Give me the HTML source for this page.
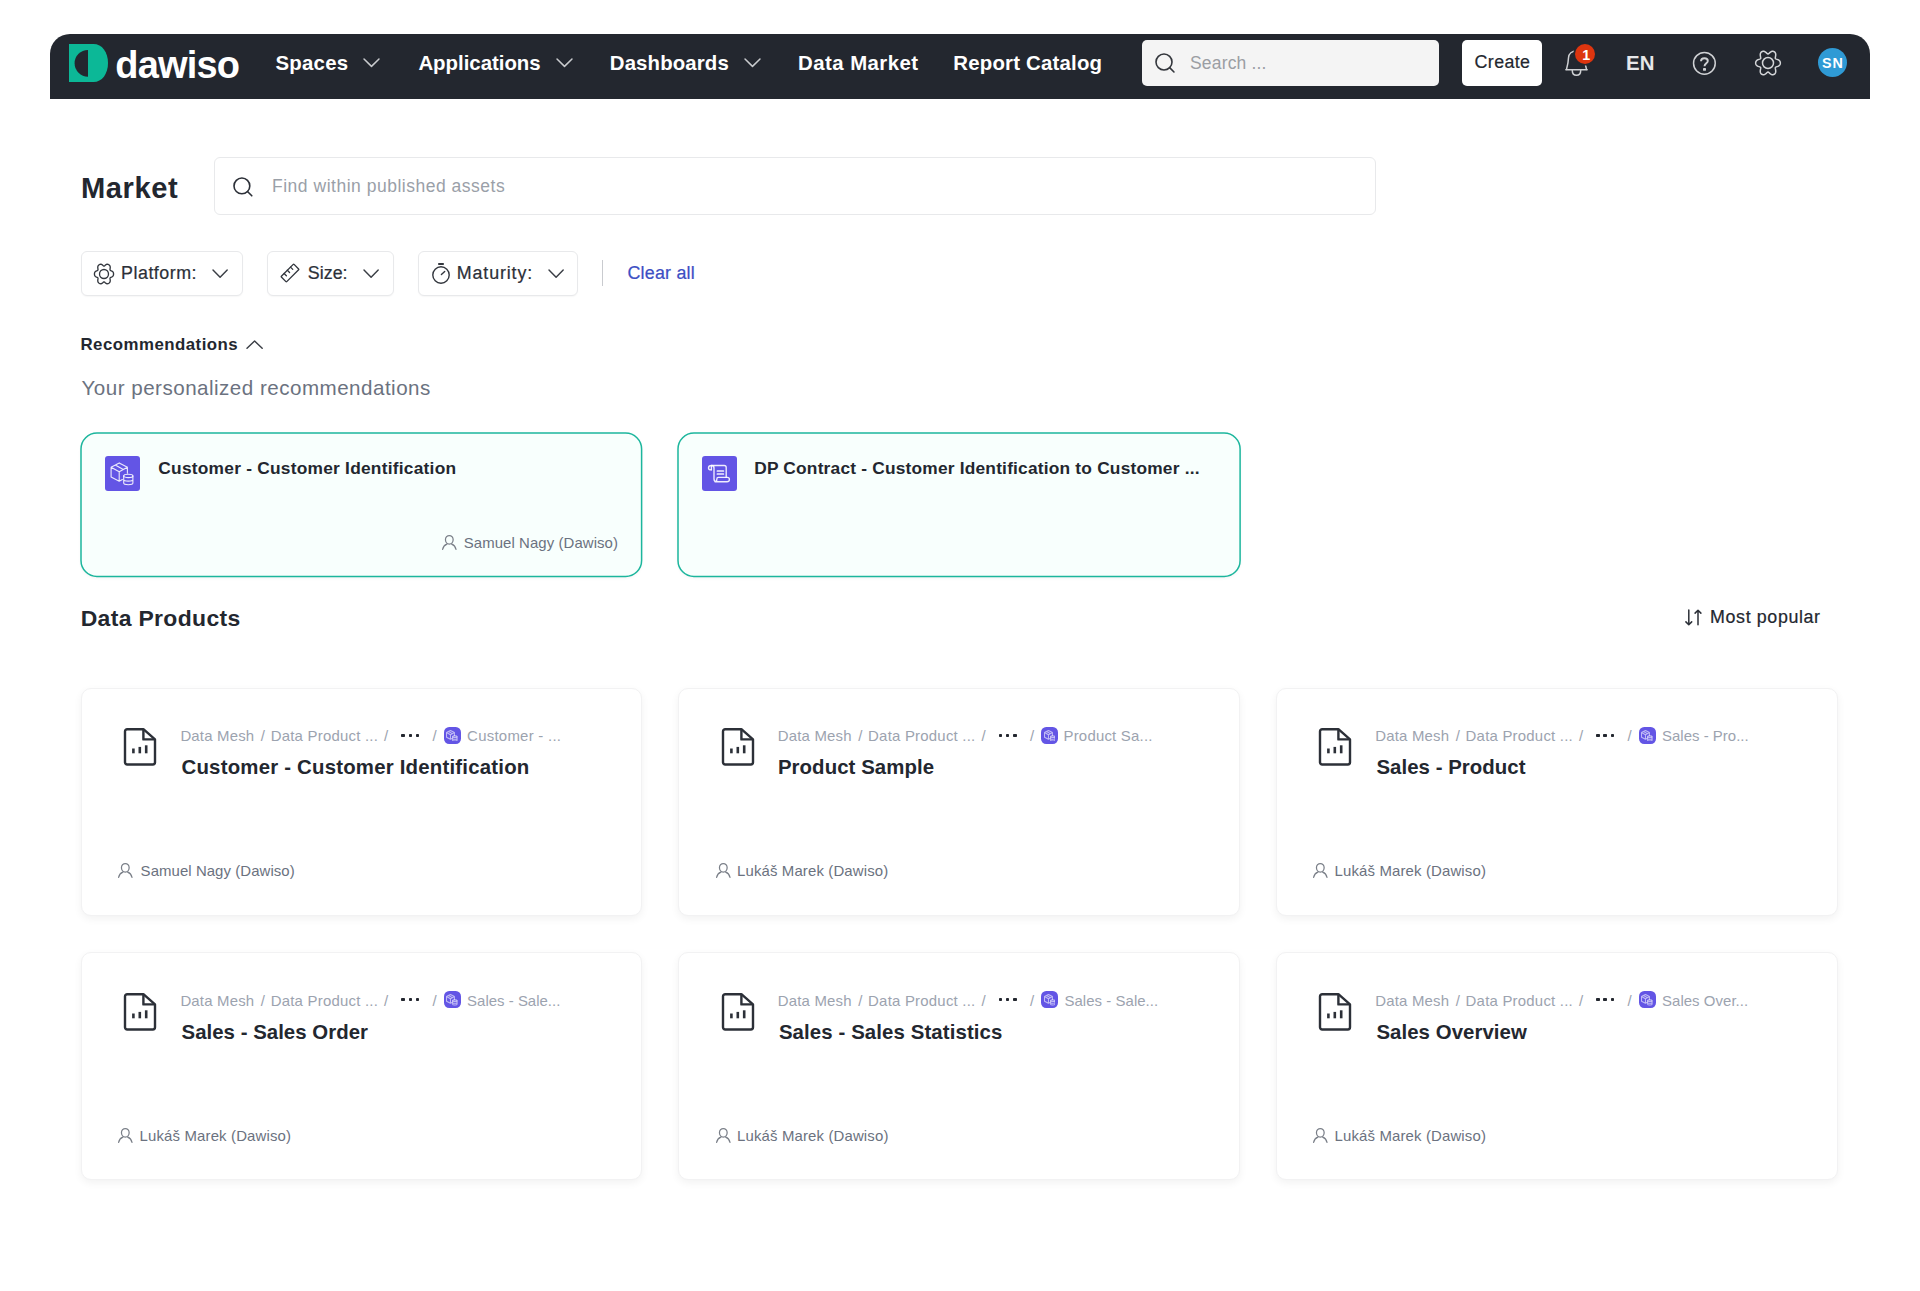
<!DOCTYPE html>
<html lang="en">
<head>
<meta charset="utf-8">
<meta name="viewport" content="width=1920">
<title>Market - dawiso</title>
<style>
html,body{margin:0;padding:0;background:#fff;}
body{width:1920px;height:1291px;position:relative;overflow:hidden;font-family:"Liberation Sans",Arial,sans-serif;}
*{box-sizing:border-box;}
.abs,.t,svg.i{position:absolute;}
header,main,section,article{display:block;position:static;margin:0;padding:0;}
.t{margin:0;white-space:nowrap;line-height:normal;display:block;}
h1.t,h2.t,h3.t{font-weight:700;}
.bar{left:50px;top:34px;width:1820px;height:65px;background:#23272f;border-radius:20px 20px 0 0;}
.nsearch{left:1142px;top:39.5px;width:296.5px;height:46.5px;background:#f4f4f4;border-radius:5px;}
.ncreate{left:1462px;top:39.5px;width:80px;height:46.5px;background:#fff;border-radius:5px;}
.badge{left:1575.1px;top:43.9px;width:20.4px;height:20.4px;border-radius:50%;background:#dd350f;box-shadow:0 0 0 1.6px #23272f;}
.avatar{left:1817.8px;top:48.1px;width:29.3px;height:29.3px;border-radius:50%;background:#2f9ad5;}
.msearch{left:214px;top:157px;width:1162px;height:58px;border:1.5px solid #e8e9eb;border-radius:6px;background:#fff;}
.fbtn{top:250.5px;height:45.5px;border:1.3px solid #e8e9eb;border-radius:6px;background:#fff;box-shadow:0 1px 1.5px rgba(0,0,0,.035);}
.divider{left:602px;top:260px;width:1.3px;height:26px;background:#c9cbcf;}
.ricon{top:456.4px;width:34.8px;height:34.6px;border-radius:3px;background:#6355e5;}
.card{width:561px;height:228px;border:1px solid #f2f2f3;border-radius:10px;background:#fff;box-shadow:0 3px 8px rgba(0,0,0,.055);}
.picon{width:17px;height:17.1px;border-radius:5.2px;background:#6355e5;}
.dots i{position:absolute;width:3.4px;height:3.4px;border-radius:0.8px;background:#23272f;top:0;}

</style>
</head>
<body>
<header class="topbar">
<div class="abs bar"></div>
<svg class="i" style="left:69.00px;top:44.00px" width="39" height="38" viewBox="0 0 39 38" aria-hidden="true"><path d="M0 0H24.5C33 0 39 8 39 19S33 38 24.5 38H0Z" fill="#0cb897"/><path d="M19 5.9A13.4 13.4 0 0 0 19 32.7Z" fill="#23272f"/></svg>
<svg class="i" style="left:361.50px;top:57.10px" width="19" height="11.4" viewBox="0 0 19 11.4" aria-hidden="true"><polyline points="2,2 9.5,9.4 17,2" fill="none" stroke="#c9cbce" stroke-width="1.5" stroke-linecap="round" stroke-linejoin="round"/></svg>
<svg class="i" style="left:554.50px;top:57.10px" width="19" height="11.4" viewBox="0 0 19 11.4" aria-hidden="true"><polyline points="2,2 9.5,9.4 17,2" fill="none" stroke="#c9cbce" stroke-width="1.5" stroke-linecap="round" stroke-linejoin="round"/></svg>
<svg class="i" style="left:742.50px;top:57.10px" width="19" height="11.4" viewBox="0 0 19 11.4" aria-hidden="true"><polyline points="2,2 9.5,9.4 17,2" fill="none" stroke="#c9cbce" stroke-width="1.5" stroke-linecap="round" stroke-linejoin="round"/></svg>
<div class="abs nsearch"></div>
<svg class="i" style="left:1154.40px;top:51.60px" width="24" height="24" viewBox="0 0 24 24" aria-hidden="true"><circle cx="10" cy="10" r="8" fill="none" stroke="#33363c" stroke-width="1.6"/><line x1="15.66" y1="15.66" x2="19.96" y2="19.96" stroke="#33363c" stroke-width="1.6" stroke-linecap="round"/></svg>
<div class="abs ncreate"></div>
<svg class="i" style="left:1563.00px;top:48.00px" width="28" height="30" viewBox="0 0 28 30" aria-hidden="true"><g fill="none" stroke="#cfd1d4" stroke-width="1.5" stroke-linecap="round" stroke-linejoin="round"><path d="M2.9 21.8H24.1"/><path d="M3.5 21.4C4.6 17.4 5.4 13.4 5.5 9.8C5.7 5.6 9 3 13.5 3S21.3 5.6 21.5 9.8C21.6 13.4 22.4 17.4 23.5 21.4"/><path d="M9.3 22.4C9.3 25.6 11 27.2 13.5 27.2S17.7 25.6 17.7 22.4"/></g></svg>
<div class="abs badge"></div>
<svg class="i" style="left:1690.00px;top:48.50px" width="29" height="29" viewBox="0 0 29 29" aria-hidden="true"><circle cx="14.4" cy="14.3" r="10.85" fill="none" stroke="#cfd1d4" stroke-width="1.5"/><path d="M11 12.3C11 10.3 12.4 9.2 14.4 9.2S17.8 10.3 17.8 12C17.8 14.2 14.5 14.5 14.5 17.3" fill="none" stroke="#cfd1d4" stroke-width="1.9"/><rect x="13" y="19" width="3" height="2.7" rx="0.4" fill="#cfd1d4"/></svg>
<svg class="i" style="left:1754.10px;top:48.80px" width="28" height="28" viewBox="0 0 28 28" aria-hidden="true"><path d="M26.35 14.00 L26.29 14.68 L26.09 15.34 L25.75 15.96 L25.24 16.52 L24.58 16.99 L23.81 17.36 L23.02 17.65 L22.30 17.90 L21.74 18.16 L21.40 18.51 L21.29 18.99 L21.35 19.63 L21.51 20.41 L21.67 21.28 L21.74 22.17 L21.69 23.01 L21.49 23.75 L21.15 24.38 L20.70 24.89 L20.18 25.28 L19.59 25.57 L18.95 25.72 L18.26 25.71 L17.55 25.53 L16.83 25.16 L16.14 24.64 L15.51 24.07 L14.95 23.53 L14.45 23.16 L14.00 23.02 L13.55 23.16 L13.05 23.53 L12.49 24.07 L11.86 24.64 L11.17 25.16 L10.45 25.53 L9.74 25.71 L9.05 25.72 L8.41 25.57 L7.83 25.28 L7.30 24.89 L6.85 24.38 L6.51 23.75 L6.31 23.01 L6.26 22.17 L6.33 21.28 L6.49 20.41 L6.65 19.63 L6.71 18.99 L6.60 18.51 L6.26 18.16 L5.70 17.90 L4.98 17.65 L4.19 17.36 L3.42 16.99 L2.76 16.52 L2.25 15.96 L1.91 15.34 L1.71 14.68 L1.65 14.00 L1.71 13.32 L1.91 12.66 L2.25 12.04 L2.76 11.48 L3.42 11.01 L4.19 10.64 L4.98 10.35 L5.70 10.10 L6.26 9.84 L6.60 9.49 L6.71 9.01 L6.65 8.37 L6.49 7.59 L6.33 6.72 L6.26 5.83 L6.31 4.99 L6.51 4.25 L6.85 3.62 L7.30 3.11 L7.82 2.72 L8.41 2.43 L9.05 2.28 L9.74 2.29 L10.45 2.47 L11.17 2.84 L11.86 3.36 L12.49 3.93 L13.05 4.47 L13.55 4.84 L14.00 4.98 L14.45 4.84 L14.95 4.47 L15.51 3.93 L16.14 3.36 L16.83 2.84 L17.55 2.47 L18.26 2.29 L18.95 2.28 L19.59 2.43 L20.18 2.72 L20.70 3.11 L21.15 3.62 L21.49 4.25 L21.69 4.99 L21.74 5.83 L21.67 6.72 L21.51 7.59 L21.35 8.37 L21.29 9.01 L21.40 9.49 L21.74 9.84 L22.30 10.10 L23.02 10.35 L23.81 10.64 L24.58 11.01 L25.24 11.48 L25.75 12.04 L26.09 12.66 L26.29 13.32Z" fill="none" stroke="#d3d5d8" stroke-width="1.5" stroke-linejoin="round"/><circle cx="14" cy="14" r="5.5" fill="none" stroke="#d3d5d8" stroke-width="1.5"/></svg>
<div class="abs avatar"></div>
<span class="t brand" style="left:115.25px;top:44.00px;font-size:38px;font-weight:700;color:#ffffff;letter-spacing:-0.819px">dawiso</span>
<span class="t" style="left:275.40px;top:51.51px;font-size:20.4px;font-weight:700;color:#ffffff;letter-spacing:0.255px">Spaces</span>
<span class="t" style="left:418.40px;top:51.51px;font-size:20.4px;font-weight:700;color:#ffffff;letter-spacing:-0.010px">Applications</span>
<span class="t" style="left:609.80px;top:51.51px;font-size:20.4px;font-weight:700;color:#ffffff;letter-spacing:0.122px">Dashboards</span>
<span class="t" style="left:798.10px;top:51.51px;font-size:20.4px;font-weight:700;color:#ffffff;letter-spacing:0.440px">Data Market</span>
<span class="t" style="left:953.30px;top:51.51px;font-size:20.4px;font-weight:700;color:#ffffff;letter-spacing:0.201px">Report Catalog</span>
<span class="t" style="left:1190.00px;top:52.51px;font-size:17.51px;font-weight:400;color:#9b9ea3;letter-spacing:0.174px">Search ...</span>
<span class="t" style="left:1474.60px;top:52.00px;font-size:17.85px;font-weight:400;color:#23272f;letter-spacing:0.353px;-webkit-text-stroke:0.2px #23272f">Create</span>
<span class="t" style="left:1582.30px;top:46.80px;font-size:14.28px;font-weight:700;color:#ffffff;letter-spacing:0.000px">1</span>
<span class="t" style="left:1625.90px;top:51.76px;font-size:20.4px;font-weight:700;color:#e6e7e9;letter-spacing:0.250px">EN</span>
<span class="t" style="left:1822.00px;top:54.91px;font-size:14.28px;font-weight:700;color:#ffffff;letter-spacing:0.985px">SN</span>
</header>
<main>
<section class="market-head">
<div class="abs msearch"></div>
<svg class="i" style="left:232.40px;top:175.60px" width="23.8" height="23.8" viewBox="0 0 23.8 23.8" aria-hidden="true"><circle cx="9.9" cy="9.9" r="7.9" fill="none" stroke="#2c3038" stroke-width="1.6"/><line x1="15.49" y1="15.49" x2="19.79" y2="19.79" stroke="#2c3038" stroke-width="1.6" stroke-linecap="round"/></svg>
<h1 class="t" style="left:81.00px;top:172.01px;font-size:29.12px;font-weight:700;color:#23272f;letter-spacing:0.571px">Market</h1>
<span class="t" style="left:272.00px;top:176.01px;font-size:17.51px;font-weight:400;color:#9aa0a8;letter-spacing:0.514px">Find within published assets</span>
</section>
<section class="filters">
<div class="abs fbtn" style="left:81px;width:161.5px"></div>
<div class="abs fbtn" style="left:266.5px;width:127.5px"></div>
<div class="abs fbtn" style="left:418px;width:160px"></div>
<svg class="i" style="left:92.75px;top:262.50px" width="22" height="22" viewBox="0 0 22 22" aria-hidden="true"><path d="M20.55 11.00 L20.52 11.56 L20.43 12.11 L20.25 12.64 L19.94 13.13 L19.50 13.55 L18.96 13.90 L18.37 14.17 L17.82 14.40 L17.38 14.64 L17.11 14.95 L17.00 15.37 L17.04 15.91 L17.13 16.56 L17.22 17.27 L17.22 17.97 L17.11 18.61 L16.89 19.15 L16.57 19.59 L16.19 19.96 L15.78 20.26 L15.33 20.52 L14.86 20.70 L14.36 20.79 L13.82 20.73 L13.28 20.52 L12.74 20.17 L12.23 19.73 L11.78 19.31 L11.37 19.01 L11.00 18.90 L10.63 19.01 L10.22 19.31 L9.77 19.73 L9.26 20.17 L8.72 20.52 L8.18 20.73 L7.64 20.79 L7.14 20.70 L6.67 20.52 L6.23 20.26 L5.81 19.96 L5.43 19.59 L5.11 19.15 L4.89 18.61 L4.78 17.97 L4.78 17.27 L4.87 16.56 L4.96 15.91 L5.00 15.37 L4.89 14.95 L4.62 14.64 L4.18 14.40 L3.63 14.17 L3.04 13.90 L2.50 13.55 L2.06 13.13 L1.75 12.64 L1.57 12.11 L1.48 11.56 L1.45 11.00 L1.48 10.44 L1.57 9.89 L1.75 9.36 L2.06 8.87 L2.50 8.45 L3.04 8.10 L3.63 7.83 L4.18 7.60 L4.62 7.36 L4.89 7.05 L5.00 6.63 L4.96 6.09 L4.87 5.44 L4.78 4.73 L4.78 4.03 L4.89 3.39 L5.11 2.85 L5.43 2.41 L5.81 2.04 L6.22 1.74 L6.67 1.48 L7.14 1.30 L7.64 1.21 L8.18 1.27 L8.72 1.48 L9.26 1.83 L9.77 2.27 L10.22 2.69 L10.63 2.99 L11.00 3.10 L11.37 2.99 L11.78 2.69 L12.23 2.27 L12.74 1.83 L13.28 1.48 L13.82 1.27 L14.36 1.21 L14.86 1.30 L15.33 1.48 L15.78 1.74 L16.19 2.04 L16.57 2.41 L16.89 2.85 L17.11 3.39 L17.22 4.03 L17.22 4.73 L17.13 5.44 L17.04 6.09 L17.00 6.63 L17.11 7.05 L17.38 7.36 L17.82 7.60 L18.37 7.83 L18.96 8.10 L19.50 8.45 L19.94 8.87 L20.25 9.36 L20.43 9.89 L20.52 10.44Z" fill="none" stroke="#33373e" stroke-width="1.35" stroke-linejoin="round"/><circle cx="11" cy="11" r="4.5" fill="none" stroke="#33373e" stroke-width="1.35"/></svg>
<svg class="i" style="left:278.60px;top:262.35px" width="22" height="22" viewBox="0 0 22 22" aria-hidden="true"><g transform="rotate(-45 11 11)" fill="none" stroke="#33373e" stroke-width="1.35" stroke-linejoin="round"><rect x="2" y="7.2" width="18" height="7.6" rx="0.6"/><path d="M6.5 7.2V10.4M11 7.2V10.4M15.5 7.2V10.4" stroke-width="1.3" stroke-linecap="round"/></g></svg>
<svg class="i" style="left:430.80px;top:261.90px" width="20" height="23" viewBox="0 0 20 23" aria-hidden="true"><g fill="none" stroke="#33373e" stroke-width="1.4" stroke-linecap="round"><circle cx="10" cy="13" r="8.2"/><path d="M7.2 2H12.8" stroke-width="2" stroke-linecap="butt"/><path d="M10.4 12.6L13.7 9.4"/></g></svg>
<svg class="i" style="left:211.20px;top:268.20px" width="18.2" height="11.2" viewBox="0 0 18.2 11.2" aria-hidden="true"><polyline points="2,2 9.1,9.2 16.2,2" fill="none" stroke="#3a3e45" stroke-width="1.45" stroke-linecap="round" stroke-linejoin="round"/></svg>
<svg class="i" style="left:362.10px;top:268.20px" width="18.2" height="11.2" viewBox="0 0 18.2 11.2" aria-hidden="true"><polyline points="2,2 9.1,9.2 16.2,2" fill="none" stroke="#3a3e45" stroke-width="1.45" stroke-linecap="round" stroke-linejoin="round"/></svg>
<svg class="i" style="left:546.70px;top:268.20px" width="18.2" height="11.2" viewBox="0 0 18.2 11.2" aria-hidden="true"><polyline points="2,2 9.1,9.2 16.2,2" fill="none" stroke="#3a3e45" stroke-width="1.45" stroke-linecap="round" stroke-linejoin="round"/></svg>
<div class="abs divider"></div>
<span class="t" style="left:121.10px;top:263.00px;font-size:17.85px;font-weight:400;color:#2c3038;letter-spacing:0.508px;-webkit-text-stroke:0.22px #2c3038">Platform:</span>
<span class="t" style="left:307.80px;top:263.00px;font-size:17.85px;font-weight:400;color:#2c3038;letter-spacing:0.022px;-webkit-text-stroke:0.22px #2c3038">Size:</span>
<span class="t" style="left:456.75px;top:263.00px;font-size:17.85px;font-weight:400;color:#2c3038;letter-spacing:0.881px;-webkit-text-stroke:0.22px #2c3038">Maturity:</span>
<span class="t" style="left:627.40px;top:263.00px;font-size:17.85px;font-weight:400;color:#3d4fc4;letter-spacing:0.239px;-webkit-text-stroke:0.22px #3d4fc4">Clear all</span>
</section>
<section class="recommendations">
<svg class="i" style="left:245.40px;top:339.00px" width="19.2" height="11.2" viewBox="0 0 19.2 11.2" aria-hidden="true"><polyline points="2,9.2 9.6,2 17.2,9.2" fill="none" stroke="#3a3e45" stroke-width="1.45" stroke-linecap="round" stroke-linejoin="round"/></svg>
<svg width="0" height="0" style="position:absolute" aria-hidden="true"><defs><filter id="rcblur" x="-5%" y="-10%" width="110%" height="130%"><feGaussianBlur stdDeviation="1.6"/></filter></defs></svg>
<h2 class="t" style="left:80.50px;top:335.20px;font-size:16.83px;font-weight:700;color:#23272f;letter-spacing:0.472px">Recommendations</h2>
<p class="t" style="left:81.50px;top:376.00px;font-size:20.6px;font-weight:400;color:#6b7280;letter-spacing:0.478px">Your personalized recommendations</p>
<article class="rec">
<svg class="i" style="left:75.4px;top:426.5px" width="572.6" height="159.4" aria-hidden="true"><rect x="6" y="7.5" width="560.6" height="143.4" rx="16" fill="#000" fill-opacity="0.05" filter="url(#rcblur)"/><rect x="6" y="6" width="560.6" height="143.4" rx="16" fill="#f8fffd" stroke="#1cb69d" stroke-width="1.5"/></svg>
<div class="abs ricon" style="left:105px"></div>
<svg class="i" style="left:110.40px;top:461.50px" width="24" height="24" viewBox="0 0 24 24" aria-hidden="true"><g fill="none" stroke="#fff" stroke-opacity="0.88" stroke-width="1.1" stroke-linejoin="round" stroke-linecap="round"><path d="M9.2 0.9L17.4 5.2V11.2M9.2 0.9L1.1 5.2V14.9L9.2 19.2V9.8M1.1 5.2L9.2 9.8L17.4 5.2M5.2 3L13.3 7.5M9.2 19.2L12.4 17.5"/><ellipse cx="18.3" cy="13.9" rx="4.6" ry="1.7"/><path d="M13.7 13.9V21C13.7 22 15.8 22.7 18.3 22.7S22.9 22 22.9 21V13.9M13.7 17.4C13.7 18.4 15.8 19.1 18.3 19.1S22.9 18.4 22.9 17.4"/></g></svg>
<svg class="i" style="left:441.20px;top:534.30px" width="17" height="17" viewBox="0 0 17 17" aria-hidden="true"><g fill="none" stroke="#7a7f88" stroke-width="1.25" stroke-linecap="round"><ellipse cx="8.3" cy="5.8" rx="3.85" ry="4.3"/><path d="M1.6 15.3C2.2 12.8 3.8 11 5.9 10.2M10.7 10.2C12.8 11 14.4 12.8 15 15.3"/></g></svg>
<h3 class="t" style="left:158.30px;top:457.60px;font-size:17.34px;font-weight:700;color:#23272f;letter-spacing:0.242px">Customer - Customer Identification</h3>
<span class="t" style="left:463.75px;top:534.10px;font-size:14.94px;font-weight:400;color:#6b7280;letter-spacing:0.078px">Samuel Nagy (Dawiso)</span>
</article>
<article class="rec">
<svg class="i" style="left:672.0px;top:426.5px" width="574.1" height="159.4" aria-hidden="true"><rect x="6" y="7.5" width="562.1" height="143.4" rx="16" fill="#000" fill-opacity="0.05" filter="url(#rcblur)"/><rect x="6" y="6" width="562.1" height="143.4" rx="16" fill="#f8fffd" stroke="#1cb69d" stroke-width="1.5"/></svg>
<div class="abs ricon" style="left:702px"></div>
<svg class="i" style="left:707.00px;top:462.90px" width="24" height="24" viewBox="0 0 24 24" aria-hidden="true"><g fill="none" stroke="#fff" stroke-opacity="0.9" stroke-width="1.35" stroke-linejoin="round" stroke-linecap="round"><path d="M4.2 6.9C2.4 6.9 1.5 6.2 1.5 5C1.5 3.4 2.8 2.5 4.6 2.5H17.2C18.4 2.5 19.2 3.2 19.2 4.4V14.4"/><path d="M4.6 2.5C6.2 2.5 7 3.4 7 5V16C7 17.8 8 18.7 9.6 18.7H20C21.6 18.7 22.4 17.8 22.4 16.5C22.4 15.2 21.6 14.4 20.4 14.4H11.4C10.2 14.4 9.8 15 9.8 16.2V16.6C9.8 17.8 9.2 18.7 8 18.7"/><path d="M4.4 3V6.8"/><path d="M10.4 8H16.4M10.4 11H16.4" stroke-width="1.7"/></g></svg>
<h3 class="t" style="left:754.20px;top:457.60px;font-size:17.34px;font-weight:700;color:#23272f;letter-spacing:0.201px">DP Contract - Customer Identification to Customer ...</h3>
</article>
</section>
<section class="products">
<svg class="i" style="left:1684.00px;top:607.50px" width="20" height="20" viewBox="0 0 20 20" aria-hidden="true"><g fill="none" stroke="#2c3038" stroke-width="1.5" stroke-linecap="round" stroke-linejoin="round"><path d="M4.8 2V16.6M1.9 13.9L4.8 16.8L7.7 13.9"/><path d="M14 16.8V2.2M11.1 5.1L14 2.2L16.9 5.1"/></g></svg>
<h2 class="t" style="left:80.70px;top:605.26px;font-size:22.95px;font-weight:700;color:#23272f;letter-spacing:0.338px">Data Products</h2>
<span class="t" style="left:1710.10px;top:607.20px;font-size:17.85px;font-weight:400;color:#23272f;letter-spacing:0.617px;-webkit-text-stroke:0.22px #23272f">Most popular</span>
<article class="product">
<div class="abs card" style="left:81px;top:688px;width:561px"></div>
<svg class="i" style="left:123.40px;top:727.20px" width="34" height="40" viewBox="0 0 34 40" aria-hidden="true"><path d="M4.2 2.2H20.4L32 12.4V35.3a2.2 2.2 0 0 1-2.2 2.2H4.2a2.2 2.2 0 0 1-2.2-2.2V4.4a2.2 2.2 0 0 1 2.2-2.2Z" fill="none" stroke="#2c3038" stroke-width="2.4" stroke-linejoin="round"/><path d="M20.4 2.2V12.4H32" fill="none" stroke="#2c3038" stroke-width="2.4" stroke-linejoin="round"/><rect x="9.1" y="21.5" width="2.6" height="4.8" fill="#2c3038"/><rect x="15.5" y="19.9" width="2.6" height="6.4" fill="#2c3038"/><rect x="21.9" y="18.3" width="2.6" height="8" fill="#2c3038"/></svg>
<div class="abs dots" style="left:401.4px;top:733.8px"><i style="left:0"></i><i style="left:7.2px"></i><i style="left:14.4px"></i></div>
<div class="abs picon" style="left:443.6px;top:726.9px"></div>
<svg class="i" style="left:446.30px;top:729.80px" width="11.6" height="11.6" viewBox="0 0 24 24" aria-hidden="true"><g fill="none" stroke="#fff" stroke-opacity="0.6" stroke-width="2.2" stroke-linejoin="round" stroke-linecap="round"><path d="M9.2 0.9L17.4 5.2V11.2M9.2 0.9L1.1 5.2V14.9L9.2 19.2V9.8M1.1 5.2L9.2 9.8L17.4 5.2M5.2 3L13.3 7.5M9.2 19.2L12.4 17.5"/><ellipse cx="18.3" cy="13.9" rx="4.6" ry="1.7"/><path d="M13.7 13.9V21C13.7 22 15.8 22.7 18.3 22.7S22.9 22 22.9 21V13.9M13.7 17.4C13.7 18.4 15.8 19.1 18.3 19.1S22.9 18.4 22.9 17.4"/></g></svg>
<svg class="i" style="left:117.10px;top:862.20px" width="17" height="17" viewBox="0 0 17 17" aria-hidden="true"><g fill="none" stroke="#7a7f88" stroke-width="1.25" stroke-linecap="round"><ellipse cx="8.3" cy="5.8" rx="3.85" ry="4.3"/><path d="M1.6 15.3C2.2 12.8 3.8 11 5.9 10.2M10.7 10.2C12.8 11 14.4 12.8 15 15.3"/></g></svg>
<span class="t" style="left:180.40px;top:727.10px;font-size:14.94px;font-weight:400;color:#9ca3af;letter-spacing:0.185px">Data Mesh</span>
<span class="t" style="left:260.80px;top:727.10px;font-size:14.94px;font-weight:400;color:#9ca3af;letter-spacing:0.000px">/</span>
<span class="t" style="left:270.70px;top:727.10px;font-size:14.94px;font-weight:400;color:#9ca3af;letter-spacing:0.225px">Data Product ...</span>
<span class="t" style="left:384.00px;top:727.10px;font-size:14.94px;font-weight:400;color:#9ca3af;letter-spacing:0.000px">/</span>
<span class="t" style="left:432.50px;top:727.10px;font-size:14.94px;font-weight:400;color:#9ca3af;letter-spacing:0.000px">/</span>
<span class="t" style="left:467.10px;top:727.10px;font-size:14.94px;font-weight:400;color:#9ca3af;letter-spacing:0.260px">Customer - ...</span>
<h3 class="t" style="left:181.50px;top:756.01px;font-size:20.4px;font-weight:700;color:#23272f;letter-spacing:0.205px">Customer - Customer Identification</h3>
<span class="t" style="left:140.60px;top:862.26px;font-size:14.94px;font-weight:400;color:#6b7280;letter-spacing:0.070px">Samuel Nagy (Dawiso)</span>
</article>
<article class="product">
<div class="abs card" style="left:678px;top:688px;width:562px"></div>
<svg class="i" style="left:720.80px;top:727.20px" width="34" height="40" viewBox="0 0 34 40" aria-hidden="true"><path d="M4.2 2.2H20.4L32 12.4V35.3a2.2 2.2 0 0 1-2.2 2.2H4.2a2.2 2.2 0 0 1-2.2-2.2V4.4a2.2 2.2 0 0 1 2.2-2.2Z" fill="none" stroke="#2c3038" stroke-width="2.4" stroke-linejoin="round"/><path d="M20.4 2.2V12.4H32" fill="none" stroke="#2c3038" stroke-width="2.4" stroke-linejoin="round"/><rect x="9.1" y="21.5" width="2.6" height="4.8" fill="#2c3038"/><rect x="15.5" y="19.9" width="2.6" height="6.4" fill="#2c3038"/><rect x="21.9" y="18.3" width="2.6" height="8" fill="#2c3038"/></svg>
<div class="abs dots" style="left:998.8px;top:733.8px"><i style="left:0"></i><i style="left:7.2px"></i><i style="left:14.4px"></i></div>
<div class="abs picon" style="left:1041.0px;top:726.9px"></div>
<svg class="i" style="left:1043.70px;top:729.80px" width="11.6" height="11.6" viewBox="0 0 24 24" aria-hidden="true"><g fill="none" stroke="#fff" stroke-opacity="0.6" stroke-width="2.2" stroke-linejoin="round" stroke-linecap="round"><path d="M9.2 0.9L17.4 5.2V11.2M9.2 0.9L1.1 5.2V14.9L9.2 19.2V9.8M1.1 5.2L9.2 9.8L17.4 5.2M5.2 3L13.3 7.5M9.2 19.2L12.4 17.5"/><ellipse cx="18.3" cy="13.9" rx="4.6" ry="1.7"/><path d="M13.7 13.9V21C13.7 22 15.8 22.7 18.3 22.7S22.9 22 22.9 21V13.9M13.7 17.4C13.7 18.4 15.8 19.1 18.3 19.1S22.9 18.4 22.9 17.4"/></g></svg>
<svg class="i" style="left:714.50px;top:862.20px" width="17" height="17" viewBox="0 0 17 17" aria-hidden="true"><g fill="none" stroke="#7a7f88" stroke-width="1.25" stroke-linecap="round"><ellipse cx="8.3" cy="5.8" rx="3.85" ry="4.3"/><path d="M1.6 15.3C2.2 12.8 3.8 11 5.9 10.2M10.7 10.2C12.8 11 14.4 12.8 15 15.3"/></g></svg>
<span class="t" style="left:777.80px;top:727.10px;font-size:14.94px;font-weight:400;color:#9ca3af;letter-spacing:0.185px">Data Mesh</span>
<span class="t" style="left:858.20px;top:727.10px;font-size:14.94px;font-weight:400;color:#9ca3af;letter-spacing:0.000px">/</span>
<span class="t" style="left:868.10px;top:727.10px;font-size:14.94px;font-weight:400;color:#9ca3af;letter-spacing:0.225px">Data Product ...</span>
<span class="t" style="left:981.40px;top:727.10px;font-size:14.94px;font-weight:400;color:#9ca3af;letter-spacing:0.000px">/</span>
<span class="t" style="left:1029.90px;top:727.10px;font-size:14.94px;font-weight:400;color:#9ca3af;letter-spacing:0.000px">/</span>
<span class="t" style="left:1063.50px;top:727.10px;font-size:14.94px;font-weight:400;color:#9ca3af;letter-spacing:0.212px">Product Sa...</span>
<h3 class="t" style="left:777.90px;top:756.01px;font-size:20.4px;font-weight:700;color:#23272f;letter-spacing:0.074px">Product Sample</h3>
<span class="t" style="left:737.00px;top:862.26px;font-size:14.94px;font-weight:400;color:#6b7280;letter-spacing:0.139px">Lukáš Marek (Dawiso)</span>
</article>
<article class="product">
<div class="abs card" style="left:1276px;top:688px;width:562px"></div>
<svg class="i" style="left:1318.30px;top:727.20px" width="34" height="40" viewBox="0 0 34 40" aria-hidden="true"><path d="M4.2 2.2H20.4L32 12.4V35.3a2.2 2.2 0 0 1-2.2 2.2H4.2a2.2 2.2 0 0 1-2.2-2.2V4.4a2.2 2.2 0 0 1 2.2-2.2Z" fill="none" stroke="#2c3038" stroke-width="2.4" stroke-linejoin="round"/><path d="M20.4 2.2V12.4H32" fill="none" stroke="#2c3038" stroke-width="2.4" stroke-linejoin="round"/><rect x="9.1" y="21.5" width="2.6" height="4.8" fill="#2c3038"/><rect x="15.5" y="19.9" width="2.6" height="6.4" fill="#2c3038"/><rect x="21.9" y="18.3" width="2.6" height="8" fill="#2c3038"/></svg>
<div class="abs dots" style="left:1596.3px;top:733.8px"><i style="left:0"></i><i style="left:7.2px"></i><i style="left:14.4px"></i></div>
<div class="abs picon" style="left:1638.5px;top:726.9px"></div>
<svg class="i" style="left:1641.20px;top:729.80px" width="11.6" height="11.6" viewBox="0 0 24 24" aria-hidden="true"><g fill="none" stroke="#fff" stroke-opacity="0.6" stroke-width="2.2" stroke-linejoin="round" stroke-linecap="round"><path d="M9.2 0.9L17.4 5.2V11.2M9.2 0.9L1.1 5.2V14.9L9.2 19.2V9.8M1.1 5.2L9.2 9.8L17.4 5.2M5.2 3L13.3 7.5M9.2 19.2L12.4 17.5"/><ellipse cx="18.3" cy="13.9" rx="4.6" ry="1.7"/><path d="M13.7 13.9V21C13.7 22 15.8 22.7 18.3 22.7S22.9 22 22.9 21V13.9M13.7 17.4C13.7 18.4 15.8 19.1 18.3 19.1S22.9 18.4 22.9 17.4"/></g></svg>
<svg class="i" style="left:1312.00px;top:862.20px" width="17" height="17" viewBox="0 0 17 17" aria-hidden="true"><g fill="none" stroke="#7a7f88" stroke-width="1.25" stroke-linecap="round"><ellipse cx="8.3" cy="5.8" rx="3.85" ry="4.3"/><path d="M1.6 15.3C2.2 12.8 3.8 11 5.9 10.2M10.7 10.2C12.8 11 14.4 12.8 15 15.3"/></g></svg>
<span class="t" style="left:1375.30px;top:727.10px;font-size:14.94px;font-weight:400;color:#9ca3af;letter-spacing:0.185px">Data Mesh</span>
<span class="t" style="left:1455.70px;top:727.10px;font-size:14.94px;font-weight:400;color:#9ca3af;letter-spacing:0.000px">/</span>
<span class="t" style="left:1465.60px;top:727.10px;font-size:14.94px;font-weight:400;color:#9ca3af;letter-spacing:0.225px">Data Product ...</span>
<span class="t" style="left:1578.90px;top:727.10px;font-size:14.94px;font-weight:400;color:#9ca3af;letter-spacing:0.000px">/</span>
<span class="t" style="left:1627.40px;top:727.10px;font-size:14.94px;font-weight:400;color:#9ca3af;letter-spacing:0.000px">/</span>
<span class="t" style="left:1662.00px;top:727.10px;font-size:14.94px;font-weight:400;color:#9ca3af;letter-spacing:0.024px">Sales - Pro...</span>
<h3 class="t" style="left:1376.40px;top:756.01px;font-size:20.4px;font-weight:700;color:#23272f;letter-spacing:0.050px">Sales - Product</h3>
<span class="t" style="left:1334.50px;top:862.26px;font-size:14.94px;font-weight:400;color:#6b7280;letter-spacing:0.147px">Lukáš Marek (Dawiso)</span>
</article>
<article class="product">
<div class="abs card" style="left:81px;top:952px;width:561px"></div>
<svg class="i" style="left:123.40px;top:991.50px" width="34" height="40" viewBox="0 0 34 40" aria-hidden="true"><path d="M4.2 2.2H20.4L32 12.4V35.3a2.2 2.2 0 0 1-2.2 2.2H4.2a2.2 2.2 0 0 1-2.2-2.2V4.4a2.2 2.2 0 0 1 2.2-2.2Z" fill="none" stroke="#2c3038" stroke-width="2.4" stroke-linejoin="round"/><path d="M20.4 2.2V12.4H32" fill="none" stroke="#2c3038" stroke-width="2.4" stroke-linejoin="round"/><rect x="9.1" y="21.5" width="2.6" height="4.8" fill="#2c3038"/><rect x="15.5" y="19.9" width="2.6" height="6.4" fill="#2c3038"/><rect x="21.9" y="18.3" width="2.6" height="8" fill="#2c3038"/></svg>
<div class="abs dots" style="left:401.4px;top:998.1px"><i style="left:0"></i><i style="left:7.2px"></i><i style="left:14.4px"></i></div>
<div class="abs picon" style="left:443.6px;top:991.2px"></div>
<svg class="i" style="left:446.30px;top:994.10px" width="11.6" height="11.6" viewBox="0 0 24 24" aria-hidden="true"><g fill="none" stroke="#fff" stroke-opacity="0.6" stroke-width="2.2" stroke-linejoin="round" stroke-linecap="round"><path d="M9.2 0.9L17.4 5.2V11.2M9.2 0.9L1.1 5.2V14.9L9.2 19.2V9.8M1.1 5.2L9.2 9.8L17.4 5.2M5.2 3L13.3 7.5M9.2 19.2L12.4 17.5"/><ellipse cx="18.3" cy="13.9" rx="4.6" ry="1.7"/><path d="M13.7 13.9V21C13.7 22 15.8 22.7 18.3 22.7S22.9 22 22.9 21V13.9M13.7 17.4C13.7 18.4 15.8 19.1 18.3 19.1S22.9 18.4 22.9 17.4"/></g></svg>
<svg class="i" style="left:117.10px;top:1126.50px" width="17" height="17" viewBox="0 0 17 17" aria-hidden="true"><g fill="none" stroke="#7a7f88" stroke-width="1.25" stroke-linecap="round"><ellipse cx="8.3" cy="5.8" rx="3.85" ry="4.3"/><path d="M1.6 15.3C2.2 12.8 3.8 11 5.9 10.2M10.7 10.2C12.8 11 14.4 12.8 15 15.3"/></g></svg>
<span class="t" style="left:180.40px;top:991.60px;font-size:14.94px;font-weight:400;color:#9ca3af;letter-spacing:0.185px">Data Mesh</span>
<span class="t" style="left:260.80px;top:991.60px;font-size:14.94px;font-weight:400;color:#9ca3af;letter-spacing:0.000px">/</span>
<span class="t" style="left:270.70px;top:991.60px;font-size:14.94px;font-weight:400;color:#9ca3af;letter-spacing:0.225px">Data Product ...</span>
<span class="t" style="left:384.00px;top:991.60px;font-size:14.94px;font-weight:400;color:#9ca3af;letter-spacing:0.000px">/</span>
<span class="t" style="left:432.50px;top:991.60px;font-size:14.94px;font-weight:400;color:#9ca3af;letter-spacing:0.000px">/</span>
<span class="t" style="left:467.10px;top:991.60px;font-size:14.94px;font-weight:400;color:#9ca3af;letter-spacing:0.019px">Sales - Sale...</span>
<h3 class="t" style="left:181.50px;top:1020.51px;font-size:20.4px;font-weight:700;color:#23272f;letter-spacing:0.031px">Sales - Sales Order</h3>
<span class="t" style="left:139.60px;top:1126.76px;font-size:14.94px;font-weight:400;color:#6b7280;letter-spacing:0.147px">Lukáš Marek (Dawiso)</span>
</article>
<article class="product">
<div class="abs card" style="left:678px;top:952px;width:562px"></div>
<svg class="i" style="left:720.80px;top:991.50px" width="34" height="40" viewBox="0 0 34 40" aria-hidden="true"><path d="M4.2 2.2H20.4L32 12.4V35.3a2.2 2.2 0 0 1-2.2 2.2H4.2a2.2 2.2 0 0 1-2.2-2.2V4.4a2.2 2.2 0 0 1 2.2-2.2Z" fill="none" stroke="#2c3038" stroke-width="2.4" stroke-linejoin="round"/><path d="M20.4 2.2V12.4H32" fill="none" stroke="#2c3038" stroke-width="2.4" stroke-linejoin="round"/><rect x="9.1" y="21.5" width="2.6" height="4.8" fill="#2c3038"/><rect x="15.5" y="19.9" width="2.6" height="6.4" fill="#2c3038"/><rect x="21.9" y="18.3" width="2.6" height="8" fill="#2c3038"/></svg>
<div class="abs dots" style="left:998.8px;top:998.1px"><i style="left:0"></i><i style="left:7.2px"></i><i style="left:14.4px"></i></div>
<div class="abs picon" style="left:1041.0px;top:991.2px"></div>
<svg class="i" style="left:1043.70px;top:994.10px" width="11.6" height="11.6" viewBox="0 0 24 24" aria-hidden="true"><g fill="none" stroke="#fff" stroke-opacity="0.6" stroke-width="2.2" stroke-linejoin="round" stroke-linecap="round"><path d="M9.2 0.9L17.4 5.2V11.2M9.2 0.9L1.1 5.2V14.9L9.2 19.2V9.8M1.1 5.2L9.2 9.8L17.4 5.2M5.2 3L13.3 7.5M9.2 19.2L12.4 17.5"/><ellipse cx="18.3" cy="13.9" rx="4.6" ry="1.7"/><path d="M13.7 13.9V21C13.7 22 15.8 22.7 18.3 22.7S22.9 22 22.9 21V13.9M13.7 17.4C13.7 18.4 15.8 19.1 18.3 19.1S22.9 18.4 22.9 17.4"/></g></svg>
<svg class="i" style="left:714.50px;top:1126.50px" width="17" height="17" viewBox="0 0 17 17" aria-hidden="true"><g fill="none" stroke="#7a7f88" stroke-width="1.25" stroke-linecap="round"><ellipse cx="8.3" cy="5.8" rx="3.85" ry="4.3"/><path d="M1.6 15.3C2.2 12.8 3.8 11 5.9 10.2M10.7 10.2C12.8 11 14.4 12.8 15 15.3"/></g></svg>
<span class="t" style="left:777.80px;top:991.60px;font-size:14.94px;font-weight:400;color:#9ca3af;letter-spacing:0.185px">Data Mesh</span>
<span class="t" style="left:858.20px;top:991.60px;font-size:14.94px;font-weight:400;color:#9ca3af;letter-spacing:0.000px">/</span>
<span class="t" style="left:868.10px;top:991.60px;font-size:14.94px;font-weight:400;color:#9ca3af;letter-spacing:0.225px">Data Product ...</span>
<span class="t" style="left:981.40px;top:991.60px;font-size:14.94px;font-weight:400;color:#9ca3af;letter-spacing:0.000px">/</span>
<span class="t" style="left:1029.90px;top:991.60px;font-size:14.94px;font-weight:400;color:#9ca3af;letter-spacing:0.000px">/</span>
<span class="t" style="left:1064.50px;top:991.60px;font-size:14.94px;font-weight:400;color:#9ca3af;letter-spacing:0.047px">Sales - Sale...</span>
<h3 class="t" style="left:778.90px;top:1020.51px;font-size:20.4px;font-weight:700;color:#23272f;letter-spacing:0.105px">Sales - Sales Statistics</h3>
<span class="t" style="left:737.00px;top:1126.76px;font-size:14.94px;font-weight:400;color:#6b7280;letter-spacing:0.147px">Lukáš Marek (Dawiso)</span>
</article>
<article class="product">
<div class="abs card" style="left:1276px;top:952px;width:562px"></div>
<svg class="i" style="left:1318.30px;top:991.50px" width="34" height="40" viewBox="0 0 34 40" aria-hidden="true"><path d="M4.2 2.2H20.4L32 12.4V35.3a2.2 2.2 0 0 1-2.2 2.2H4.2a2.2 2.2 0 0 1-2.2-2.2V4.4a2.2 2.2 0 0 1 2.2-2.2Z" fill="none" stroke="#2c3038" stroke-width="2.4" stroke-linejoin="round"/><path d="M20.4 2.2V12.4H32" fill="none" stroke="#2c3038" stroke-width="2.4" stroke-linejoin="round"/><rect x="9.1" y="21.5" width="2.6" height="4.8" fill="#2c3038"/><rect x="15.5" y="19.9" width="2.6" height="6.4" fill="#2c3038"/><rect x="21.9" y="18.3" width="2.6" height="8" fill="#2c3038"/></svg>
<div class="abs dots" style="left:1596.3px;top:998.1px"><i style="left:0"></i><i style="left:7.2px"></i><i style="left:14.4px"></i></div>
<div class="abs picon" style="left:1638.5px;top:991.2px"></div>
<svg class="i" style="left:1641.20px;top:994.10px" width="11.6" height="11.6" viewBox="0 0 24 24" aria-hidden="true"><g fill="none" stroke="#fff" stroke-opacity="0.6" stroke-width="2.2" stroke-linejoin="round" stroke-linecap="round"><path d="M9.2 0.9L17.4 5.2V11.2M9.2 0.9L1.1 5.2V14.9L9.2 19.2V9.8M1.1 5.2L9.2 9.8L17.4 5.2M5.2 3L13.3 7.5M9.2 19.2L12.4 17.5"/><ellipse cx="18.3" cy="13.9" rx="4.6" ry="1.7"/><path d="M13.7 13.9V21C13.7 22 15.8 22.7 18.3 22.7S22.9 22 22.9 21V13.9M13.7 17.4C13.7 18.4 15.8 19.1 18.3 19.1S22.9 18.4 22.9 17.4"/></g></svg>
<svg class="i" style="left:1312.00px;top:1126.50px" width="17" height="17" viewBox="0 0 17 17" aria-hidden="true"><g fill="none" stroke="#7a7f88" stroke-width="1.25" stroke-linecap="round"><ellipse cx="8.3" cy="5.8" rx="3.85" ry="4.3"/><path d="M1.6 15.3C2.2 12.8 3.8 11 5.9 10.2M10.7 10.2C12.8 11 14.4 12.8 15 15.3"/></g></svg>
<span class="t" style="left:1375.30px;top:991.60px;font-size:14.94px;font-weight:400;color:#9ca3af;letter-spacing:0.185px">Data Mesh</span>
<span class="t" style="left:1455.70px;top:991.60px;font-size:14.94px;font-weight:400;color:#9ca3af;letter-spacing:0.000px">/</span>
<span class="t" style="left:1465.60px;top:991.60px;font-size:14.94px;font-weight:400;color:#9ca3af;letter-spacing:0.225px">Data Product ...</span>
<span class="t" style="left:1578.90px;top:991.60px;font-size:14.94px;font-weight:400;color:#9ca3af;letter-spacing:0.000px">/</span>
<span class="t" style="left:1627.40px;top:991.60px;font-size:14.94px;font-weight:400;color:#9ca3af;letter-spacing:0.000px">/</span>
<span class="t" style="left:1662.00px;top:991.60px;font-size:14.94px;font-weight:400;color:#9ca3af;letter-spacing:0.053px">Sales Over...</span>
<h3 class="t" style="left:1376.40px;top:1020.51px;font-size:20.4px;font-weight:700;color:#23272f;letter-spacing:0.064px">Sales Overview</h3>
<span class="t" style="left:1334.50px;top:1126.76px;font-size:14.94px;font-weight:400;color:#6b7280;letter-spacing:0.147px">Lukáš Marek (Dawiso)</span>
</article>
</section>
</main>
</body>
</html>
